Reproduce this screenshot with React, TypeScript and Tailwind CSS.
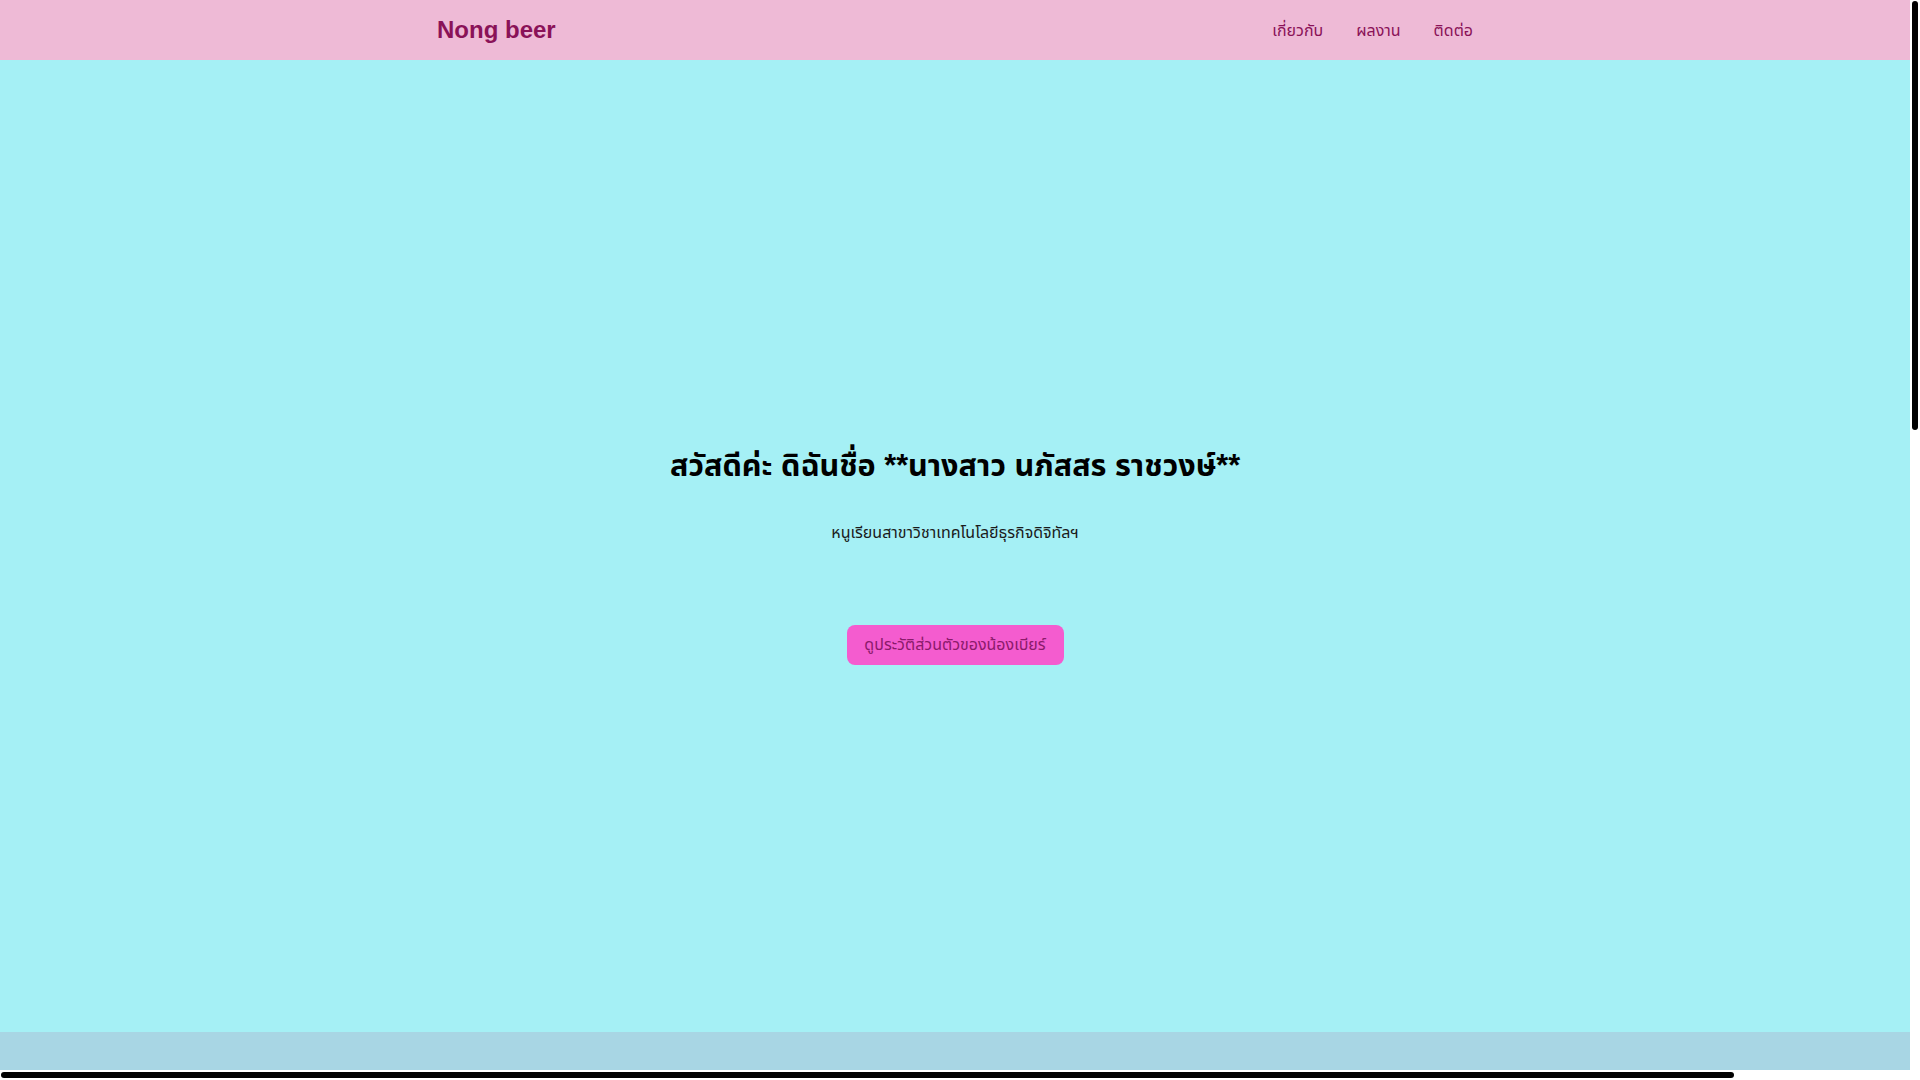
const NAV = ["เกี่ยวกับ", "ผลงาน", "ติดต่อ"];

function VScroll() {
  return (
    <div className="w-[10px] shrink-0 bg-white pt-[1px]">
      <div className="mx-auto h-[429px] w-[6px] rounded-full bg-black" />
    </div>
  );
}

function HScroll() {
  return (
    <div className="flex h-[10px] items-center bg-white pl-[1px]">
      <div className="h-[6px] w-[1733px] rounded-full bg-black" />
    </div>
  );
}

export default function App() {
  return (
    <div className="flex h-screen w-screen flex-col overflow-hidden font-['Liberation_Sans','Noto_Sans_Thai','Noto_Sans',sans-serif] text-[#111]">
      <div className="flex min-h-0 flex-1">
        <div className="w-[1910px] shrink-0 overflow-hidden">
          <header className="h-[60px] bg-[#eebad6]">
            <div className="mx-auto flex h-full w-[1068px] items-center justify-between px-4">
              <a className="text-[24px] font-bold text-[#8a1258]">Nong beer</a>
              <nav className="flex items-center gap-[33px] pt-[1px] text-[16px] text-[#8a1258]">
                {NAV.map((n) => (
                  <a key={n}>{n}</a>
                ))}
              </nav>
            </div>
          </header>

          <section className="flex h-[972px] flex-col items-center justify-center bg-[#a5f0f5] pt-[18px] text-center">
            <h1 className="text-[30.6px] font-bold leading-[40px] text-black">
              สวัสดีค่ะ ดิฉันชื่อ **นางสาว นภัสสร ราชวงษ์**
            </h1>
            <p className="mt-[36px] text-[16px] leading-[24px] text-[#1a1a1a]">
              หนูเรียนสาขาวิชาเทคโนโลยีธุรกิจดิจิทัลฯ
            </p>
            <button className="mt-[80px] h-[40px] w-[217px] rounded-[8px] bg-[#f45ccf] text-[16px] text-[#8b1a6b]">
              ดูประวัติส่วนตัวของน้องเบียร์
            </button>
          </section>

          <section className="h-[600px] bg-[#a8d6e4]" />
        </div>
        <VScroll />
      </div>
      <HScroll />
    </div>
  );
}
